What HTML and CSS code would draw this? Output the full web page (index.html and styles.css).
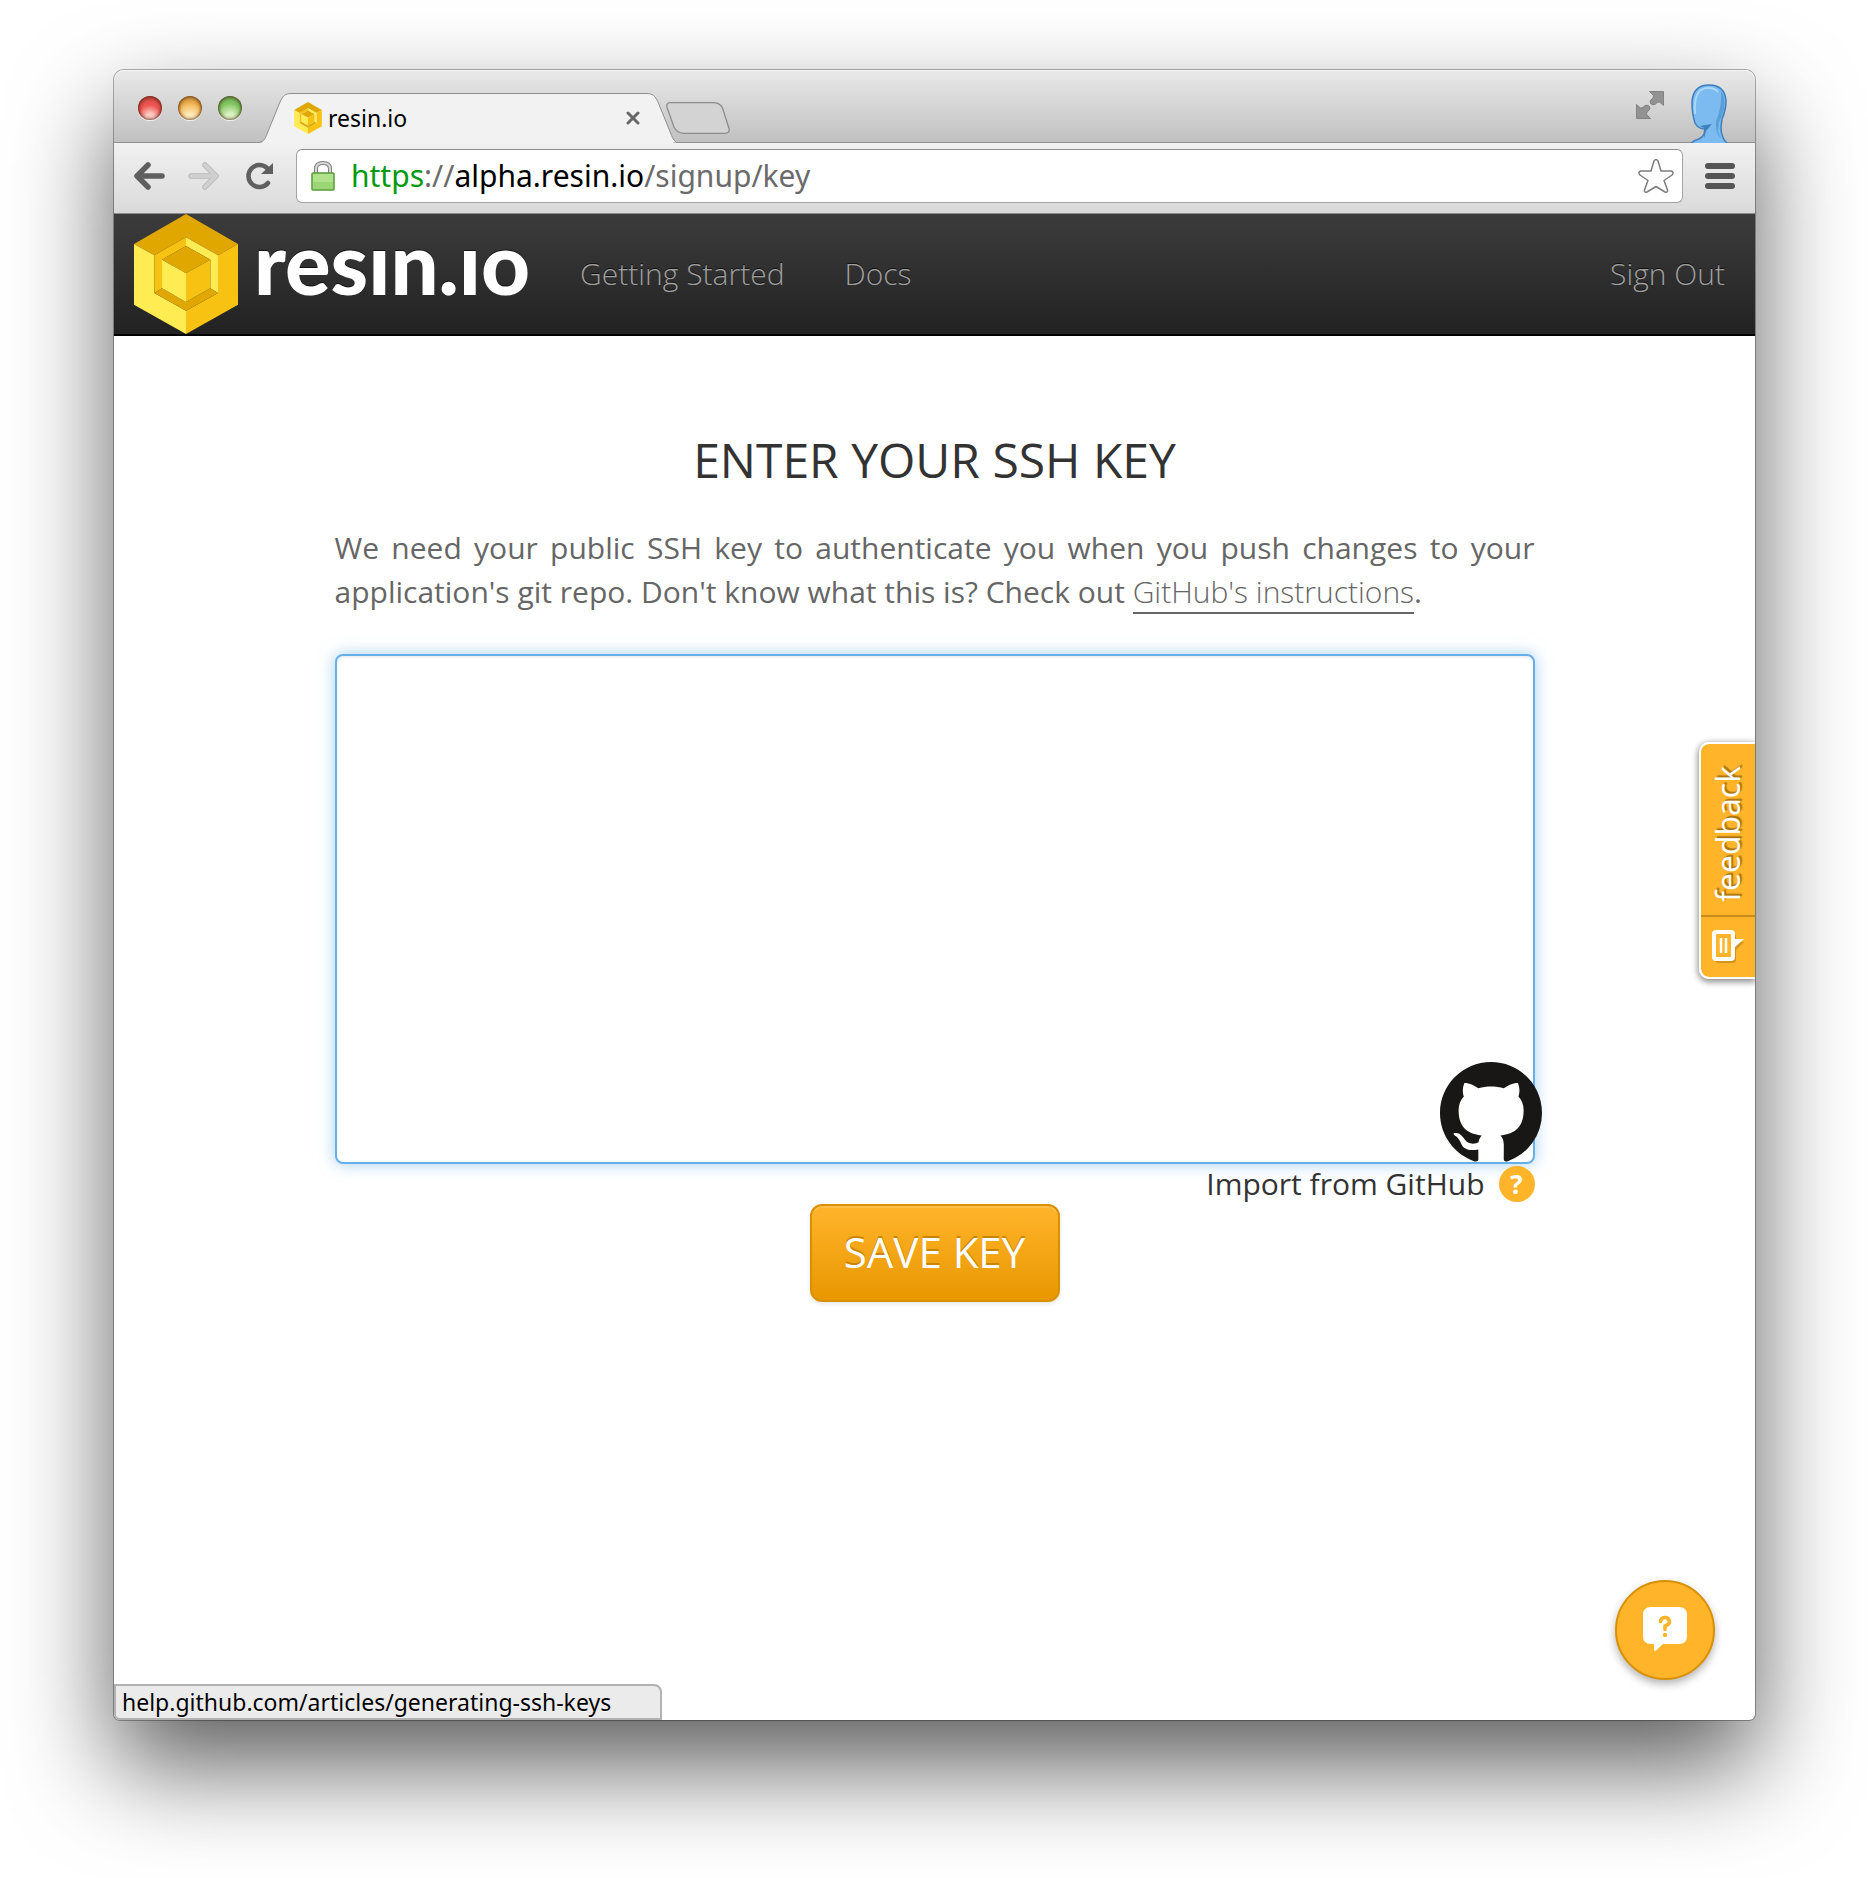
FILE: index.html
```html
<!DOCTYPE html>
<html lang="en">
<head>
<meta charset="utf-8">
<title>resin.io</title>
<link rel="stylesheet" href="styles.css">
</head>
<body>
<svg class="defs" aria-hidden="true">
  <symbol id="cube" viewBox="0 0 312 360">
    <path fill="#e0a700" d="M156 0 312 90 252 124 156 70 61 124 0 90z"/>
    <path fill="#ffeb52" d="M0 90 61 124V237L156 290V360L0 272z"/>
    <path fill="#f8c212" d="M312 90V272L156 360V290L252 237V124z"/>
    <path fill="#f8c212" d="M156 70V96L84 137V223L61 237V124z"/>
    <path fill="#ffeb52" d="M156 70 252 124V237L229 223V137L156 96z"/>
    <path fill="#e0a700" d="M61 237 84 223 156 264 229 223 252 237 156 290z"/>
    <path fill="#e0a700" d="M156 96 229 137 156 178 84 137z"/>
    <path fill="#ffeb52" d="M84 137 156 178V264L84 223z"/>
    <path fill="#f8c212" d="M229 137V223L156 264V178z"/>
  </symbol>
</svg>
<div class="window">
  <header class="tabstrip">
    <div class="lights">
      <button class="light light-red" aria-label="Close window"></button>
      <button class="light light-amber" aria-label="Minimize"></button>
      <button class="light light-green" aria-label="Zoom"></button>
    </div>
    <div class="tab">
      <svg class="tab-shape" viewBox="0 0 418 50" aria-hidden="true">
        <path fill="#f2f2f2" stroke="#8f8f8f" d="M-2 49.500C6 49.500 7 46 9 41L22 9C25 3 27 .500 33 .500H388C395 .500 397 3 400 9L413 41C415 46 416 49.500 422 49.500"/>
        <path fill="none" stroke="#f2f2f2" stroke-width="2" d="M4 50H415"/>
      </svg>
      <div class="tab-body">
        <svg class="favicon" aria-hidden="true"><use href="#cube"/></svg>
        <span class="tab-title">resin.io</span>
        <button class="tab-close" aria-label="Close tab">
          <svg width="14" height="14" viewBox="0 0 14 14"><path d="M2 2 12 12M12 2 2 12" stroke="#686868" stroke-width="3" stroke-linecap="round"/></svg>
        </button>
      </div>
    </div>
    <button class="new-tab" aria-label="New tab">
      <svg width="64" height="32" viewBox="0 0 64 32"><path d="M4 .700H48Q54 1 56.500 6L63 26.500Q64 31.300 59 31.300H17Q11 31 8 25L1.200 6Q-.300 1 4 .700z" fill="#d3d3d3" stroke="#8c8c8c" stroke-width="1.300"/></svg>
    </button>
    <div class="strip-end">
      <button class="fullscreen" aria-label="Full screen">
        <svg width="28" height="28" viewBox="0 0 28 28" fill="#929292" stroke="#767676" stroke-width=".800"><path d="M13.500.500H27.500V14.500L23.500 11Q21 11 19.500 13 17 15 14.500 12.500 13 9.500 16 8 17.500 6.500 17.500 4.500z"/><path d="M.500 13.500 4.500 17Q7 17 8.500 15 11 13 13.500 15.500 15 18.500 12 20 10.500 21.500 10.500 23.500L14.500 27.500H.500z"/></svg>
      </button>
      <svg class="avatar" width="38" height="59" viewBox="0 0 38 59" aria-hidden="true">
        <path fill="#7bbbf0" stroke="#3f7fbd" stroke-width="1.500" d="M1 59Q5 56 9 55 13 53 14 50L15 45Q8 45 5 39 2 30 2 18 3 1 19 1 35 1 36 17 36 26 32 35L31 43Q31 54 37 59"/>
        <path fill="#5a9fd6" d="M31 7Q36 14 34 25 32 33 29 38L28 47 31 55Q25 48 26 37 32 24 31 7z"/>
        <path fill="#3f7fbd" d="M10 42 22 40 16 47 14 54V44z"/>
        <path fill="none" stroke="#a9d8fb" stroke-width="2" d="M5 30Q3 4 18 4 25 4 28 8"/>
      </svg>
    </div>
  </header>
  <div class="toolbar">
    <button class="tool" aria-label="Back"><svg width="32" height="28" viewBox="0 0 32 28"><path d="M14 3 3 14 14 25M4 14H28" fill="none" stroke="#5f5f5f" stroke-width="5.500" stroke-linecap="round" stroke-linejoin="round"/></svg></button>
    <button class="tool" aria-label="Forward" disabled><svg width="32" height="28" viewBox="0 0 32 28"><path d="M17 3 28 14 17 25M27 14H3" fill="none" stroke="#b8b8b8" stroke-width="5.500" stroke-linecap="round" stroke-linejoin="round"/><path d="M17 3 28 14 17 25M27 14H3" fill="none" stroke="#cfcfcf" stroke-width="4" stroke-linecap="round" stroke-linejoin="round"/></svg></button>
    <button class="tool tool-reload" aria-label="Reload"><svg width="28" height="28" viewBox="0 0 28 28"><path d="M22 21A11 11 0 1 1 21 6" fill="none" stroke="#5f5f5f" stroke-width="4.500" stroke-linecap="round"/><path d="M27 1V12H15z" fill="#5f5f5f"/></svg></button>
    <div class="omnibox">
      <svg width="24" height="30" viewBox="0 0 24 30" aria-hidden="true"><path d="M5 13V8Q5 2 12 2T19 8V13" fill="none" stroke="#808080" stroke-width="4"/><path d="M5 13V8Q5 2 12 2T19 8V13" fill="none" stroke="#d9d9d9" stroke-width="2"/><rect x="1" y="12" width="22" height="17" rx="1" fill="#b0e28c" stroke="#55993a" stroke-width="1.500"/><path d="M2 21H22V28H2z" fill="#9bd575"/></svg>
      <div class="url" role="textbox" aria-label="Address"><span class="scheme">https</span>://<span class="host">alpha.resin.io</span>/signup/key</div>
      <button class="star" aria-label="Bookmark"><svg width="36" height="36" viewBox="0 0 36 36"><path d="M16 3Q18 0 20 3L23 13 33 13Q36.500 14 34 17L26 22.500 29.500 32Q30 35 27 34L18 28.500 9 34Q6 35 6.500 32L10 22.500 2 17Q-.500 14 3 13L13 13z" fill="#fff" stroke="#7d7d7d" stroke-width="1.500" stroke-linejoin="round"/></svg></button>
    </div>
    <button class="tool" aria-label="Menu"><svg width="30" height="26" viewBox="0 0 30 26"><path d="M3 3H27M3 13H27M3 23H27" stroke="#555" stroke-width="6" stroke-linecap="round"/></svg></button>
  </div>
  <div class="page">
    <nav class="navbar">
      <a class="brand" href="#" aria-label="resin.io"><svg class="brand-cube" aria-hidden="true"><use href="#cube"/></svg><span class="brand-name">resın.ıo</span></a>
      <a class="nav-link" href="#">Getting Started</a>
      <a class="nav-link" href="#">Docs</a>
      <a class="nav-link nav-end" href="#">Sign Out</a>
    </nav>
    <main class="content">
      <form class="key-form">
        <h1><label for="key">ENTER YOUR SSH KEY</label></h1>
        <p class="intro">We need your public SSH key to authenticate you when you push changes to your application's git repo. Don't know what this is? Check out <a href="#">GitHub's instructions</a>.</p>
        <textarea id="key" class="key-box"></textarea>
        <div class="import">
          <svg class="octocat" viewBox="0 0 16 16" aria-hidden="true"><path fill="#181715" d="M8 0C3.580 0 0 3.580 0 8c0 3.540 2.290 6.530 5.470 7.590.4.070.55-.17.55-.38 0-.19-.01-.82-.01-1.490-2.010.37-2.530-.49-2.690-.94-.09-.23-.48-.94-.82-1.130-.28-.15-.68-.52-.01-.53.63-.01 1.080.58 1.230.82.72 1.210 1.870.87 2.330.66.070-.52.280-.87.510-1.070-1.780-.2-3.640-.89-3.640-3.950 0-.87.310-1.590.820-2.150-.08-.2-.36-1.020.080-2.120 0 0 .67-.21 2.200.820.640-.18 1.320-.27 2-.27.680 0 1.360.090 2 .27 1.530-1.040 2.200-.82 2.200-.82.440 1.100.160 1.920.080 2.120.510.560.820 1.270.820 2.150 0 3.070-1.870 3.750-3.650 3.950.290.250.540.730.540 1.480 0 1.070-.01 1.930-.01 2.200 0 .210.150.460.550.380A8.013 8.013 0 0016 8c0-4.420-3.580-8-8-8z"/></svg>
          <a class="import-link" href="#">Import from GitHub</a>
          <button class="hint" type="button" aria-label="Help">?</button>
        </div>
        <button class="save" type="button">SAVE KEY</button>
      </form>
    </main>
    <button class="feedback">
      <span class="feedback-text">feedback</span>
      <svg width="34" height="34" viewBox="0 0 34 34" aria-hidden="true"><path d="M7 5H22Q25 5 25 8V13H33L25 21V30Q25 34 22 34H7Q4 34 4 30V8Q4 5 7 5z" fill="#a87412" opacity=".5"/><path d="M5 1H20Q24 1 24 5V10H33L24 18V28Q24 32 20 32H5Q1 32 1 28V5Q1 1 5 1z" fill="#fff"/><rect x="5" y="5" width="15" height="23" rx="1" fill="#ffb42a"/><path d="M10 9V24M15 9V24" stroke="#fff" stroke-width="2.500"/></svg>
    </button>
    <button class="chat" aria-label="Ask a question">
      <svg width="44" height="46" viewBox="0 0 44 46"><path fill="#fff" d="M8 0H36Q44 0 44 8V29Q44 37 36 37H20L13 43.500Q11 45 11 42V37H8Q0 37 0 29V8Q0 0 8 0z"/><path d="M17.500 14.500Q18 10.500 22 10.500T26.500 14.500Q26.500 17.500 22 19V22.500" fill="none" stroke="#ffb42a" stroke-width="3.600" stroke-linecap="round"/><circle cx="22" cy="28" r="2.200" fill="#ffb42a"/></svg>
    </button>
    <div class="status">help.github.com/articles/generating-ssh-keys</div>
  </div>
</div>
</body>
</html>
```
FILE: styles.css
```css
* { box-sizing: border-box; }
body {
  margin: 0;
  min-height: 100vh;
  padding: 70px 113px 158px 114px;
  display: flex;
  flex-direction: column;
  background: #fff;
  font-family: "Open Sans", sans-serif;
  font-size: 30px;
}
button { border: 0; padding: 0; margin: 0; background: none; font: inherit; display: block; }
button svg { display: block; }
a { color: inherit; text-decoration: none; }
.defs { position: absolute; width: 0; height: 0; }
.window {
  flex: 1;
  display: flex;
  flex-direction: column;
  border-radius: 10px 10px 6px 6px;
  box-shadow: 0 0 0 1px rgba(0, 0, 0, .3), 0 46px 100px rgba(0, 0, 0, .64);
  background: #fff;
}

/* Tab strip */
.tabstrip {
  display: flex;
  height: 73px;
  padding-right: 27px;
  border-radius: 10px 10px 0 0;
  background: linear-gradient(#e9e9e9, #c0c0c0);
  box-shadow: inset 0 1px #f6f6f6, inset 0 -1px #8f8f8f;
}
.lights { display: flex; gap: 16px; padding: 26px 16px 0 24px; }
.light { width: 24px; height: 24px; border-radius: 50%; box-shadow: inset 0 0 3px 1px rgba(60, 20, 0, .65), inset 0 4px 4px rgba(0, 0, 0, .2), 0 1px 1px #f4f4f4; }
.light-red { background: radial-gradient(circle at 50% 88%, #f9c9c2 15%, #ee5550 50%); }
.light-amber { background: radial-gradient(circle at 50% 88%, #fdeab9 15%, #f3b14d 60%); }
.light-green { background: radial-gradient(circle at 50% 88%, #dcf0c4 15%, #84c964 55%); }
.tab { display: grid; width: 418px; height: 50px; margin-top: 23px; }
.tab-shape, .tab-body { grid-area: 1 / 1; }
.tab-shape { width: 418px; height: 50px; }
.tab-body { display: flex; align-items: center; padding: 0 36px; font-family: "Noto Sans", sans-serif; font-size: 23px; color: #000; }
.favicon { width: 28px; height: 32px; margin-right: 6px; }
.tab-title { flex: 1; }
.new-tab { margin: 32px 0 0 -10px; align-self: flex-start; }
.strip-end { display: flex; margin-left: auto; gap: 26px; }
.fullscreen { margin-top: 21px; align-self: flex-start; }
.avatar { margin-top: 14px; overflow: hidden; }

/* Toolbar */
.toolbar {
  display: flex;
  align-items: center;
  gap: 22px;
  height: 71px;
  padding: 0 20px 4px;
  background: linear-gradient(#f1f1f1, #dadada);
  border-bottom: 1px solid #8a8a8a;
}
.tool { flex: none; }
.tool-reload { margin-left: 4px; }
.omnibox {
  flex: 1;
  display: flex;
  align-items: center;
  height: 54px;
  padding: 0 8px 0 14px;
  border: 1px solid #a4a4a4;
  border-top-color: #8c8c8c;
  border-radius: 6px;
  background: #fff;
}
.url { flex: 1; padding-left: 16px; font-family: "Noto Sans", sans-serif; font-size: 30px; line-height: 40px; color: #6b6b6b; }
.scheme { color: #009a10; }
.host { color: #000; }

/* Page */
.page { position: relative; flex: 1; display: flex; flex-direction: column; }
.navbar {
  display: flex;
  align-items: center;
  height: 122px;
  padding: 0 30px 0 20px;
  border-bottom: 2px solid #000;
  background: linear-gradient(#3c3c3c, #222);
  color: #a0a0a0;
}
.brand { display: flex; align-items: flex-start; gap: 16px; margin-right: 50px; }
.brand-cube { width: 104px; height: 120px; }
.brand-name { color: #fff; font-family: Lato, sans-serif; font-weight: 900; font-size: 85px; line-height: 96px; text-shadow: 0 -1px #111; }
.nav-link { font-weight: 300; line-height: 40px; margin-right: 60px; text-shadow: 0 -1px #111; }
.nav-end { margin: 0 0 0 auto; }
.content { flex: 1; padding: 98px 24px 120px; }
.key-form { max-width: 1200px; margin: 0 auto; display: flex; flex-direction: column; }
h1 { margin: 0; font-size: 48px; line-height: 52px; font-weight: 400; text-align: center; color: #333; }
.intro { margin: 40px 0; line-height: 44px; text-align: justify; color: #666; }
.intro a { font-weight: 300; border-bottom: 2px solid #666; }
.key-box {
  display: block;
  width: 100%;
  height: 510px;
  padding: 12px 16px;
  border: 2px solid #66afe9;
  border-radius: 8px;
  outline: 0;
  resize: none;
  box-shadow: inset 0 2px 2px rgba(0, 0, 0, .06), 0 0 16px rgba(102, 175, 233, .6);
  font: inherit;
}
.import { position: relative; display: flex; justify-content: flex-end; align-items: center; gap: 14px; height: 40px; color: #333; }
.import-link { line-height: 40px; }
.octocat { position: absolute; right: -7px; bottom: 40px; width: 102px; height: 102px; }
.hint { width: 36px; height: 36px; border-radius: 50%; background: #ffb42a; color: #fff; font-size: 26px; font-weight: 700; line-height: 36px; text-align: center; }
.save {
  align-self: center;
  width: 250px;
  height: 98px;
  padding-bottom: 4px;
  border: 2px solid #d99000;
  border-radius: 12px;
  background: linear-gradient(#ffb42a, #e89700);
  box-shadow: inset 0 2px rgba(255, 255, 255, .15), 0 2px 4px rgba(0, 0, 0, .1);
  color: #fff;
  font-size: 42px;
  text-shadow: 0 -2px #c98500;
}

/* Overlays */
.feedback {
  position: absolute;
  right: 0;
  top: 528px;
  width: 56px;
  height: 237px;
  display: grid;
  grid-template-rows: 171px 62px;
  place-items: center;
  border: 2px solid #fff;
  border-right: 0;
  border-radius: 10px 0 0 10px;
  background: linear-gradient(#ffb42a 171px, #c98a1c 171px, #c98a1c 173px, #ffb42a 173px) padding-box;
  box-shadow: 0 2px 6px 1px rgba(0, 0, 0, .45);
  clip-path: inset(-12px 0 -12px -12px);
  color: #fff;
}
.feedback-text { writing-mode: vertical-rl; transform: rotate(180deg); padding-bottom: 8px; font-size: 32px; font-weight: 500; line-height: 40px; text-shadow: 2px 2px 1px #a87412; }
.chat {
  position: absolute;
  right: 40px;
  bottom: 40px;
  width: 100px;
  height: 100px;
  display: grid;
  place-items: center;
  border: 2px solid #d99000;
  border-radius: 50%;
  background: #ffb42a;
  box-shadow: 0 4px 8px rgba(0, 0, 0, .3);
}
.status {
  position: absolute;
  left: 0;
  bottom: 0;
  width: 548px;
  padding: 0 6px;
  border: 2px solid #b2b2b2;
  border-radius: 0 8px 0 6px;
  background: #ebebeb;
  color: #000;
  font-family: "Noto Sans", sans-serif;
  font-size: 23px;
  line-height: 32px;
  white-space: nowrap;
  text-shadow: 0 1px #fff;
}
```
